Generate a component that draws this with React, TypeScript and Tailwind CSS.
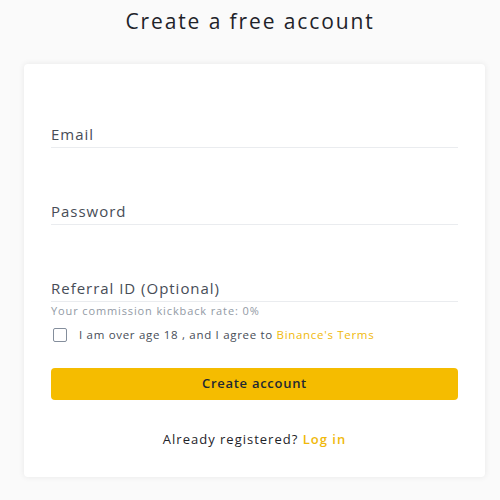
export default function App() {
  return (
    <div
      className="min-h-[500px] bg-[#fafafa] pt-[7px]"
      style={{ fontFamily: '"Open Sans", "Liberation Sans", sans-serif' }}
    >
      <h1 className="text-center text-[21px] font-medium leading-[28px] tracking-[0.09em] text-[#1e2329]">
        Create a free account
      </h1>
      <div className="mx-[24px] mt-[29px] w-[461px] rounded-[4px] bg-white px-[27px] pt-[7px] pb-[28px] shadow-[0_0_6px_rgba(0,0,0,0.08)]">
        {["Email", "Password", "Referral ID (Optional)"].map((label) => (
          <div key={label} className="flex h-[77px] items-end border-b border-[#eaecef] pb-[3px]">
            <span className="text-[15px] leading-[20px] tracking-[0.065em] text-[#474d57]">{label}</span>
          </div>
        ))}
        <p className="mt-[1px] text-[11px] leading-[16px] tracking-[0.08em] text-[#929aa5]">
          Your commission kickback rate: 0%
        </p>
        <label className="mt-[8px] flex items-center gap-[12px] pl-[2px]">
          <span className="h-[14px] w-[14px] rounded-[2px] border-[1.5px] border-[#848e9c]" />
          <span className="text-[11.5px] leading-[16px] tracking-[0.06em] text-[#474d57]">
            I am over age 18 , and I agree to <span className="text-[#f0b90b]">Binance's Terms</span>
          </span>
        </label>
        <button className="mt-[25px] h-[32px] w-full rounded-[4px] bg-[#f5bc00] text-[13px] font-semibold tracking-[0.055em] text-[#212833]">
          Create account
        </button>
        <p className="mt-[29px] text-center text-[13px] leading-[20px] tracking-[0.077em] text-[#1e2329]">
          Already registered? <span className="font-semibold text-[#f0b90b]">Log in</span>
        </p>
      </div>
    </div>
  );
}
